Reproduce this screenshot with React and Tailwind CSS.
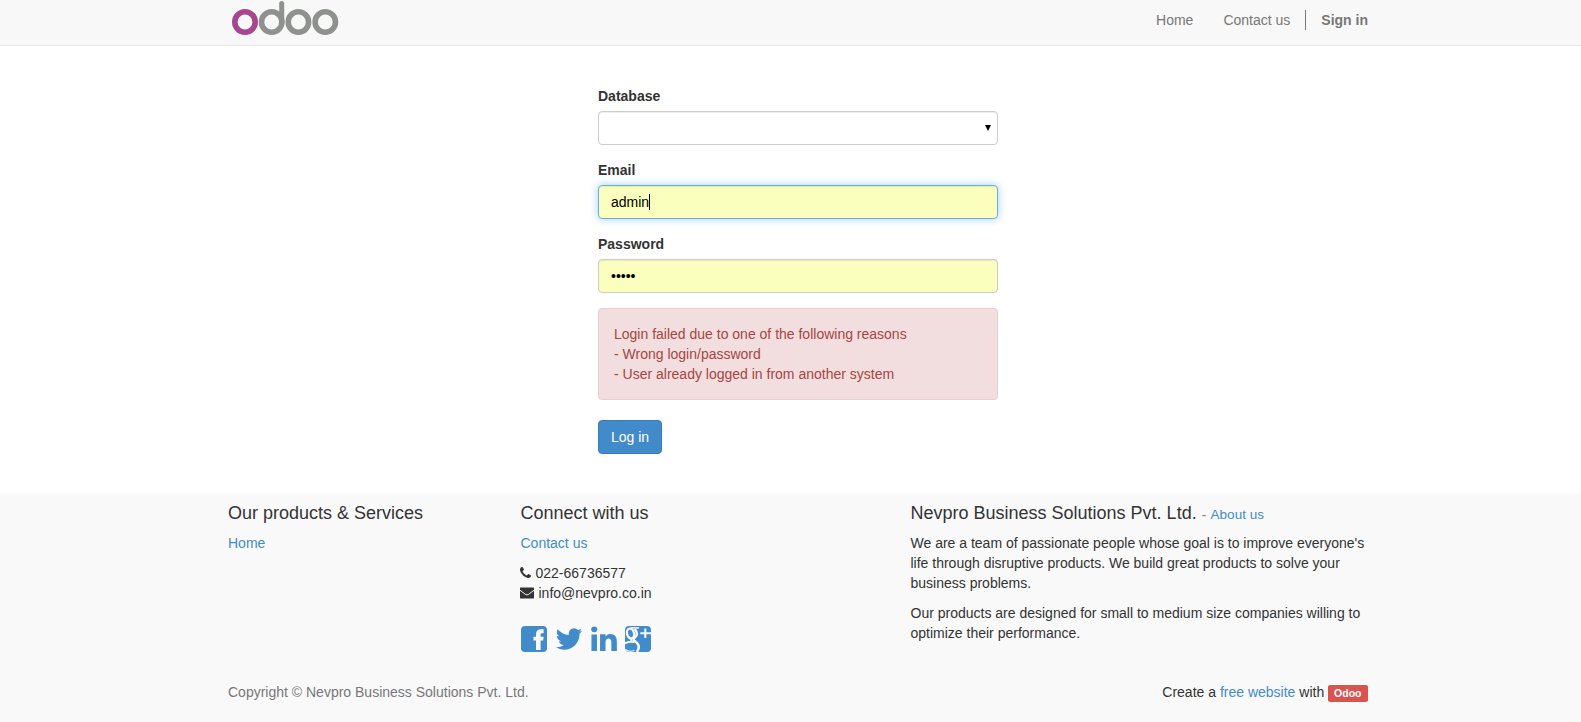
const icons = {
  phone:
    "M1600 1240q0 27-10 70.5t-21 68.5q-21 50-122 106-94 51-186 51-27 0-53-3.5t-57.5-12.5-47-14.5-55.5-20.5-49-18q-98-35-175-83-127-79-264-216t-216-264q-48-77-83-175-3-9-18-49t-20.5-55.5-14.5-47-12.5-57.5-3.5-53q0-92 51-186 56-101 106-122 25-11 68.5-21t70.5-10q14 0 21 3 18 6 53 76 11 19 30 54t35 63.5 31 53.5q3 4 17.5 25t21.5 35.5 7 28.5q0 20-28.5 50t-62 55-62 53-28.5 46q0 9 5 22.5t8.5 20.5 14 24 11.5 19q76 137 174 235t235 174q2 1 19 11.5t24 14 20.5 8.5 22.5 5q18 0 46-28.5t53-62 55-62 50-28.5q14 0 28.5 7t35.5 21.5 25 17.5q25 15 53.5 31t63.5 35 54 30q70 35 76 53 3 7 3 21z",
  twitter:
    "M1684 408q-67 98-162 167 1 14 1 42 0 130-38 259.5t-115.5 248.5-184.5 210.5-258 146-323 54.5q-271 0-496-145 35 4 78 4 225 0 401-138-105-2-188-64.5t-114-159.5q33 5 61 5 43 0 85-11-112-23-185.5-111.5t-73.5-205.5v-4q68 38 146 41-66-44-105-115t-39-154q0-88 44-163 121 149 294.5 238.5t371.5 99.5q-8-38-8-74 0-134 94.5-228.5t228.5-94.5q140 0 236 102 109-21 205-78-37 115-142 178 93-10 186-50z",
  linkedin:
    "M477 625v991h-330v-991h330zm21-306q1 73-50.5 122t-135.5 49h-2q-82 0-132-49t-50-122q0-74 51.5-122.5t134.5-48.5 133 48.5 51 122.5zm1166 729v568h-329v-530q0-105-40.5-164.5t-126.5-59.5q-63 0-105.5 34.5t-63.5 85.5q-11 30-11 81v553h-329q2-399 2-647t-1-296l-1-59h329v144h-2q20-32 41-56t56.5-52 87-43.5 114.5-15.5q171 0 275 113.5t104 332.5z",
};

function Glyph({ d, viewBox = "0 0 1792 1792", className }) {
  return (
    <svg viewBox={viewBox} className={className} fill="currentColor" aria-hidden="true">
      <path d={d} />
    </svg>
  );
}

function Logo() {
  return (
    <svg className="block h-[45px] w-[120px]" viewBox="0 0 120 45" fill="none" strokeWidth="5.6" strokeLinecap="round">
      <circle cx="17" cy="22" r="10.2" stroke="#a7458f" />
      <g stroke="#8f918f">
        <circle cx="43.7" cy="22" r="10.2" />
        <path d="M53.7 22V3.600" strokeWidth="5" />
        <circle cx="70.4" cy="22" r="10.2" />
        <circle cx="97.3" cy="22" r="10.2" />
      </g>
    </svg>
  );
}

function EnvelopeIcon() {
  return (
    <svg className="-ml-[0.5px] mr-[4.5px] block h-[12px] w-[14px]" viewBox="0 0 14 12" aria-hidden="true">
      <rect y="0.5" width="14" height="11" rx="0.4" fill="#333" />
      <path d="M0 3.200 5.300 7.300Q7 8.500 8.700 7.300L14 3.200" fill="none" stroke="#f9f9f9" strokeWidth="1" />
    </svg>
  );
}

function FacebookIcon() {
  return (
    <svg className="block size-[26px]" viewBox="0 0 26 26" aria-hidden="true">
      <rect width="26" height="26" rx="4" fill="#428bca" />
      <path d="M15 24V14.500H12.500V10.700H15V8.300c0-3.500 1.700-5.100 4.900-5.100h2.700v4h-1.500c-1.200 0-1.500.5-1.500 1.500v2h3l-.4 3.800h-2.600V24z" fill="#f9f9f9" />
    </svg>
  );
}

function GooglePlusIcon() {
  return (
    <svg className="block size-[26px]" viewBox="0 0 26 26" aria-hidden="true">
      <rect width="26" height="26" rx="4" fill="#428bca" />
      <g fill="none" stroke="#f9f9f9">
        <path d="M20.300 2.500v9.500M15.300 7.300H26" strokeWidth="2" />
        <ellipse cx="5.500" cy="7.500" rx="3.500" ry="5" strokeWidth="2.300" transform="rotate(-14 5.500 7.500)" />
        <path d="M5.500 1.900h8.500" strokeWidth="1.500" />
        <path d="M9.800 3c2.700 3.500 2.500 6.500.2 8.400-1.900 1.600-1.700 2.800.6 4.400 4 2.900 3.900 6.500 1.300 10.200" strokeWidth="2.500" />
        <path d="M0 17.300c3-1.600 6-1.900 9.500-1.300M6.600 12.500c-.8 1.200-.5 2.300 1 3.400" strokeWidth="2" />
        <path d="M0 23.500c2.500 1.800 6 2.200 9.500 1" strokeWidth="1.200" />
      </g>
    </svg>
  );
}

function Field({ label, children }) {
  return (
    <div className="mb-[15px]">
      <div className="mb-[5px] font-bold">{label}</div>
      {children}
    </div>
  );
}

const link = "text-[#428bca]";

export default function App() {
  return (
    <div className="h-[722px] overflow-hidden bg-white font-['Liberation_Sans',Arial,sans-serif] text-[14px] leading-[20px] text-[#333]">
      <header className="h-[46px] border-b border-[#e7e7e7] bg-[#f8f8f8]">
        <div className="ml-[228px] flex w-[1140px] justify-between">
          <Logo />
          <nav className="flex items-start pt-[10px] text-[#777]">
            <a className="px-[15px]">Home</a>
            <a className="px-[15px]">Contact us</a>
            <a className="border-l border-[#777] pl-[15px] font-bold">Sign in</a>
          </nav>
        </div>
      </header>

      <main className="h-[448px] pt-[40px]">
        <form className="ml-[598px] w-[400px]">
          <Field label="Database">
            <div className="flex h-[34px] items-center justify-end rounded-[4px] border border-[#ccc] bg-white pr-[6px] shadow-[inset_0_1px_1px_rgba(0,0,0,0.075)]">
              <svg className="-mt-px h-[6px] w-[6px]" viewBox="0 0 6 6" aria-hidden="true">
                <path d="M0 0h6L3 6z" fill="#000" />
              </svg>
            </div>
          </Field>
          <Field label="Email">
            <div className="flex h-[34px] items-center rounded-[4px] border border-[#66afe9] bg-[#faffbd] px-[12px] text-black shadow-[inset_0_1px_1px_rgba(0,0,0,0.075),0_0_8px_rgba(102,175,233,0.6)]">
              admin
              <span className="h-[16px] w-px bg-black" />
            </div>
          </Field>
          <Field label="Password">
            <div className="flex h-[34px] items-center rounded-[4px] border border-[#ccc] bg-[#faffbd] px-[12px] text-black shadow-[inset_0_1px_1px_rgba(0,0,0,0.075)]">
              •••••
            </div>
          </Field>
          <div className="mb-[20px] rounded-[4px] border border-[#ebccd1] bg-[#f2dede] p-[15px] text-[#a94442]">
            Login failed due to one of the following reasons
            <br />- Wrong login/password
            <br />- User already logged in from another system
          </div>
          <button type="button" className="block h-[34px] rounded-[4px] border border-[#357ebd] bg-[#428bca] px-[12px] text-white">
            Log in
          </button>
        </form>
      </main>

      <footer className="h-[228px] bg-[#f9f9f9] pt-[9px]">
        <div className="ml-[228px] flex h-[179px] w-[1140px]">
          <section className="w-[292.5px]">
            <h4 className="mb-[10px] text-[18px] leading-[20px]">Our products &amp; Services</h4>
            <a className={link}>Home</a>
          </section>
          <section className="w-[390px]">
            <h4 className="mb-[10px] text-[18px] leading-[20px]">Connect with us</h4>
            <a className={link}>Contact us</a>
            <div className="mt-[10px] flex items-center">
              <Glyph d={icons.phone} viewBox="192 128 1408 1408" className="-mt-px -ml-[0.5px] mr-[4.5px] size-[11px]" />
              022-66736577
            </div>
            <div className="flex items-center">
              <EnvelopeIcon />
              info@nevpro.co.in
            </div>
            <div className="mt-[23px] flex text-[#428bca]">
              <FacebookIcon />
              <Glyph d={icons.twitter} className="ml-[7px] size-[30px] -translate-y-[2px]" />
              <Glyph d={icons.linkedin} className="ml-[5px] size-[30px] -translate-y-[2px]" />
              <div className="ml-[6px]">
                <GooglePlusIcon />
              </div>
            </div>
          </section>
          <section className="w-[457.5px]">
            <h4 className="mb-[10px] text-[18px] leading-[20px]">
              Nevpro Business Solutions Pvt. Ltd.{" "}
              <small className="text-[13.5px] leading-none text-[#777]">
                - <a className="ml-[0.7px] text-[#428bca]">About us</a>
              </small>
            </h4>
            <p className="mb-[10px]">
              We are a team of passionate people whose goal is to improve everyone's life through disruptive products.
              We build great products to solve your business problems.
            </p>
            <p>Our products are designed for small to medium size companies willing to optimize their performance.</p>
          </section>
        </div>
        <div className="ml-[228px] flex w-[1140px] justify-between">
          <div className="text-[#777]">Copyright © Nevpro Business Solutions Pvt. Ltd.</div>
          <div className="pr-[0.5px]">
            Create a <a className={link}>free website</a> with{" "}
            <span className="inline-block rounded-[2px] bg-[#d9534f] px-[6px] pt-[3px] pb-[3px] text-[10.5px] leading-[11px] font-bold text-white">
              Odoo
            </span>
          </div>
        </div>
      </footer>
    </div>
  );
}
